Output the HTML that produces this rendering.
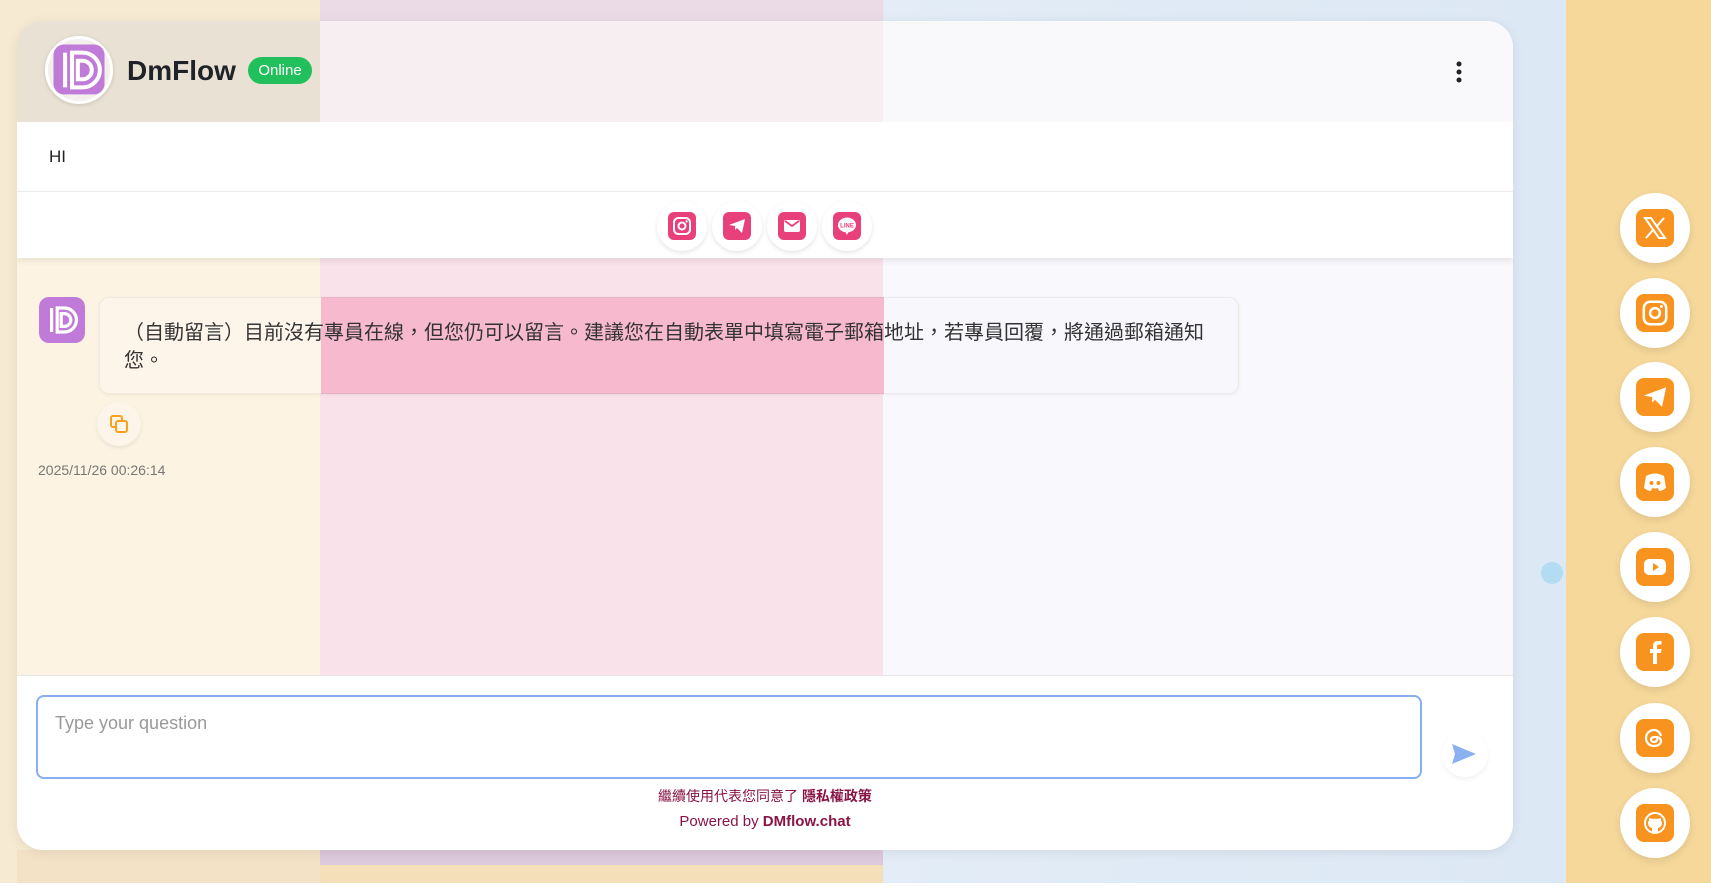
<!DOCTYPE html>
<html><head><meta charset="utf-8"><style>
*{box-sizing:border-box;margin:0;padding:0}
body{width:1711px;height:895px;overflow:hidden;background:#fff;font-family:"Liberation Sans","Noto Sans CJK TC",sans-serif;position:relative}
.abs{position:absolute}
.bg{left:0;top:0;width:1711px;height:883px;background:linear-gradient(90deg,#f7ead2 0,#f7ead2 320px,#eadbe6 320px,#eadbe6 883px,#e3ecf7 883px,#dce8f4 1566px,#f6d89a 1566px)}
.card{left:17px;top:21px;width:1496px;height:829px;border-radius:26px;overflow:hidden;box-shadow:0 2px 12px rgba(0,0,0,.08)}
.hdr{left:0;top:0;width:100%;height:101px;background:linear-gradient(90deg,#e9e1d3 0,#e9e1d3 303px,#f6eef0 303px,#f6eef0 866px,#f9f9fc 866px)}
.hi{left:0;top:101px;width:100%;height:70px;background:#fff;border-bottom:1px solid #eee}
.icr{left:0;top:171px;width:100%;height:66px;background:#fff;box-shadow:0 3px 6px rgba(0,0,0,.08);z-index:2}
.body{left:0;top:237px;width:100%;height:417px;background:linear-gradient(90deg,#fdf3e2 0,#fdf3e2 303px,#f9e2ea 303px,#f9e2ea 866px,#f8f8fd 866px)}
.inp{left:0;top:654px;width:100%;height:175px;background:#fff;border-top:1px solid #e6e6e6}
.pc{width:50px;height:50px;border-radius:50%;background:#fff;box-shadow:0 2px 5px rgba(0,0,0,.1);display:flex;align-items:center;justify-content:center}
.rc{left:1620px;width:70px;height:70px;border-radius:50%;background:#fff;box-shadow:0 3px 8px rgba(0,0,0,.1);display:flex;align-items:center;justify-content:center}
.ob{width:38px;height:38px;border-radius:8px;background:#f7931e;display:flex;align-items:center;justify-content:center}
</style></head><body>
<div class="abs bg"></div>
<div class="abs" style="left:17px;top:850px;width:303px;height:33px;background:#f3e2c6"></div>
<div class="abs" style="left:320px;top:850px;width:563px;height:15px;background:#ddc9dc"></div>
<div class="abs" style="left:320px;top:865px;width:563px;height:18px;background:#f4dfb8"></div>
<div class="abs" style="left:1541px;top:562px;width:22px;height:22px;border-radius:50%;background:#b3dcf2"></div>
<div class="abs card">
 <div class="abs hdr">
  <div class="abs" style="left:28px;top:15px;width:68px;height:68px;border-radius:50%;background:#f2efec;border:3px solid #fff;box-shadow:0 1px 4px rgba(0,0,0,.15);display:flex;align-items:center;justify-content:center">
   <svg width="58" height="58" viewBox="0 0 50 50"><rect x="3" y="3" width="44" height="43" rx="9" fill="#c07ad8"/><path d="M13 10v30M19 10h9a15 15 0 0 1 0 30h-9zM24 17h4a8 8 0 0 1 0 16h-4z" stroke="#fff" stroke-width="3.5" fill="none"/></svg>
  </div>
  <div class="abs" style="left:110px;top:34px;font-size:28px;font-weight:bold;color:#1f2328">DmFlow</div>
  <div class="abs" style="left:231px;top:36px;width:64px;height:27px;border-radius:14px;background:#22c05c;color:#fff;font-size:15px;text-align:center;line-height:27px">Online</div>
  <svg class="abs" style="left:1434px;top:39px" width="16" height="26"><circle cx="8" cy="4" r="2.5" fill="#222"/><circle cx="8" cy="12" r="2.5" fill="#222"/><circle cx="8" cy="20" r="2.5" fill="#222"/></svg>
 </div>
 <div class="abs hi"><div class="abs" style="left:32px;top:25px;font-size:17px;color:#222">HI</div></div>
 <div class="abs icr">
  <div class="abs pc" style="left:640px;top:9px"><div class="ob" style="background:#e8407a;width:28px;height:28px;border-radius:6px"><svg width="20" height="20" viewBox="0 0 20 20"><rect x="2" y="2" width="16" height="16" rx="4.5" stroke="#fff" stroke-width="2" fill="none"/><circle cx="10" cy="10" r="3.5" stroke="#fff" stroke-width="2" fill="none"/><circle cx="14.6" cy="5.4" r="1.1" fill="#fff"/></svg></div></div>
  <div class="abs pc" style="left:695px;top:9px"><div class="ob" style="background:#e8407a;width:28px;height:28px;border-radius:6px"><svg width="20" height="20" viewBox="0 0 20 20"><path d="M2 9L18 3L15 17L10 12L8 14L8 10Z" fill="#fff"/></svg></div></div>
  <div class="abs pc" style="left:750px;top:9px"><div class="ob" style="background:#e8407a;width:28px;height:28px;border-radius:6px"><svg width="20" height="20" viewBox="0 0 20 20"><rect x="2" y="4" width="16" height="12" rx="2" fill="#fff"/><path d="M3 5l7 5 7-5" stroke="#e8407a" stroke-width="1.8" fill="none"/></svg></div></div>
  <div class="abs pc" style="left:805px;top:9px"><div class="ob" style="background:#e8407a;width:28px;height:28px;border-radius:6px"><svg width="22" height="22" viewBox="0 0 22 22"><ellipse cx="11" cy="10" rx="9" ry="7.5" fill="#fff"/><path d="M9 16l2 4 2-4z" fill="#fff"/><text x="11" y="12.5" font-size="6" font-weight="bold" fill="#e8407a" text-anchor="middle" font-family="Liberation Sans">LINE</text></svg></div></div>
 </div>
 <div class="abs body">
  <div class="abs" style="left:22px;top:39px;width:46px;height:46px;border-radius:10px;background:#c07ad8;display:flex;align-items:center;justify-content:center"><svg width="40" height="40" viewBox="0 0 50 50"><path d="M12 10v30M19 10h9a15 15 0 0 1 0 30h-9zM24 17h4a8 8 0 0 1 0 16h-4z" stroke="#fff" stroke-width="4" fill="none"/></svg></div>
  <div class="abs" style="left:82px;top:39px;width:1140px;height:97px;border-radius:10px;border:1px solid rgba(0,0,0,.05);background:linear-gradient(90deg,#fdf5ea 0,#fdf5ea 221px,#f6b9cd 221px,#f6b9cd 784px,#f8f8fc 784px);box-shadow:0 1px 4px rgba(0,0,0,.05)"></div>
  <div class="abs" style="left:107px;top:61px;width:1090px;font-size:20px;line-height:28px;color:#333">（自動留言）目前沒有專員在線，但您仍可以留言。建議您在自動表單中填寫電子郵箱地址，若專員回覆，將通過郵箱通知您。</div>
  <div class="abs" style="left:80px;top:144px;width:44px;height:44px;border-radius:50%;background:#fdf5ea;box-shadow:0 2px 5px rgba(0,0,0,.08);display:flex;align-items:center;justify-content:center"><svg width="24" height="24" viewBox="0 0 24 24" fill="none" stroke="#f7a21e" stroke-width="2"><rect x="9" y="9" width="11" height="11" rx="2"/><path d="M15 9V6a2 2 0 0 0-2-2H6a2 2 0 0 0-2 2v7a2 2 0 0 0 2 2h3"/></svg></div>
  <div class="abs" style="left:21px;top:204px;font-size:14px;color:#777">2025/11/26 00:26:14</div>
 </div>
 <div class="abs inp">
  <div class="abs" style="left:19px;top:19px;width:1386px;height:84px;border:2px solid #86aef0;border-radius:8px;background:#fff"></div>
  <div class="abs" style="left:38px;top:37px;font-size:18px;color:#999">Type your question</div>
  <div class="abs" style="left:1425px;top:55px;width:46px;height:46px;border-radius:50%;background:#fff;box-shadow:0 2px 5px rgba(0,0,0,.06)"></div>
  <svg class="abs" style="left:1434px;top:67px" width="26" height="22" viewBox="0 0 26 22"><path d="M1 1L25 11L1 21L4 11Z" fill="#8ab0f0"/></svg>
  <div class="abs" style="left:0;top:110px;width:1496px;text-align:center;font-size:14px;color:#8a1446">繼續使用代表您同意了 <b>隱私權政策</b></div>
  <div class="abs" style="left:0;top:137px;width:1496px;text-align:center;font-size:15px;color:#8a1446">Powered by <b>DMflow.chat</b></div>
 </div>
</div>
<div class="abs rc" style="top:193px"><div class="ob"><svg width="26" height="26" viewBox="0 0 26 26"><path d="M3 3h6l14 20h-6zM4 23L11 15M22 3l-7 8" stroke="#fff" stroke-width="2" fill="none"/></svg></div></div>
<div class="abs rc" style="top:278px"><div class="ob"><svg width="28" height="28" viewBox="0 0 20 20"><rect x="2" y="2" width="16" height="16" rx="4.5" stroke="#fff" stroke-width="1.8" fill="none"/><circle cx="10" cy="10" r="3.5" stroke="#fff" stroke-width="1.8" fill="none"/><circle cx="14.6" cy="5.4" r="1" fill="#fff"/></svg></div></div>
<div class="abs rc" style="top:362px"><div class="ob"><svg width="28" height="28" viewBox="0 0 20 20"><path d="M2 9L18 3L15 17L10 12L8 14L8 10Z" fill="#fff"/></svg></div></div>
<div class="abs rc" style="top:447px"><div class="ob"><svg width="28" height="28" viewBox="0 0 28 28"><path d="M5 8q9-5 18 0l2 12q-4 3-7 3l-1-3q-3 1-6 0l-1 3q-3 0-7-3z" fill="#fff"/><circle cx="10.5" cy="15" r="2" fill="#f7931e"/><circle cx="17.5" cy="15" r="2" fill="#f7931e"/></svg></div></div>
<div class="abs rc" style="top:532px"><div class="ob"><svg width="28" height="28" viewBox="0 0 28 28"><rect x="3" y="6" width="22" height="16" rx="5" fill="#fff"/><path d="M12 10l6 4-6 4z" fill="#f7931e"/></svg></div></div>
<div class="abs rc" style="top:617px"><div class="ob"><svg width="28" height="28" viewBox="0 0 28 28"><path d="M16 26V15h4l.5-4H16V8.5c0-1 .5-2 2-2h2.5V3h-3.5c-3.5 0-5 2-5 5v3H9v4h3v11" fill="#fff"/></svg></div></div>
<div class="abs rc" style="top:703px"><div class="ob"><svg width="28" height="28" viewBox="0 0 28 28" fill="none" stroke="#fff" stroke-width="2.2"><path d="M20 12c-1-4-4-6-7-6-5 0-8 4-8 8s3 8 8 8c4 0 7-2 7-5s-3-4-6-4-4 1-4 2.5 1.5 2.5 3 2.5c3 0 4-3 3-6"/></svg></div></div>
<div class="abs rc" style="top:788px"><div class="ob"><svg width="28" height="28" viewBox="0 0 28 28"><circle cx="14" cy="14" r="10" stroke="#fff" stroke-width="2" fill="none"/><path d="M11 23v-4c-2-.5-4-2-4-5 0-1 .5-2 1-2.5 0-1 0-2 .5-2.5 1 0 2 .5 2.5 1 2-.5 4-.5 6 0 .5-.5 1.5-1 2.5-1 .5.5.5 1.5.5 2.5.5.5 1 1.5 1 2.5 0 3-2 4.5-4 5v4z" fill="#fff"/></svg></div></div>
</body></html>
